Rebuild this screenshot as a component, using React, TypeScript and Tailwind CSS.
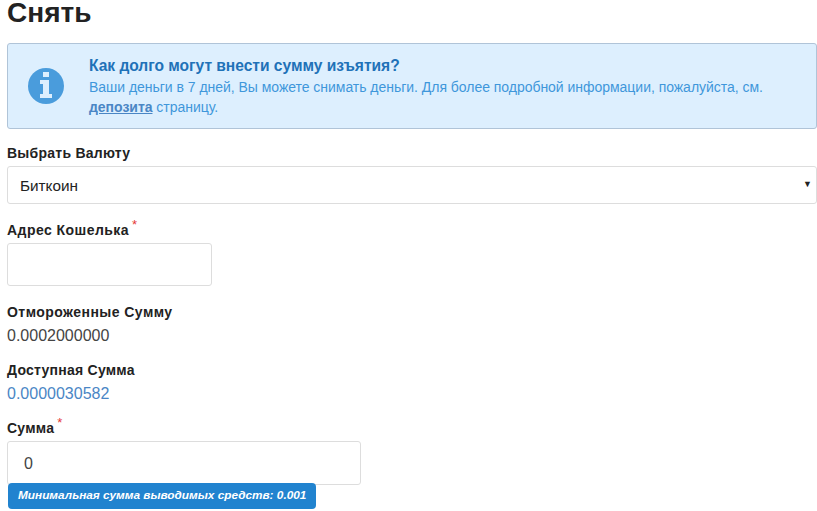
function Label({ text, required, wide }: { text: string; required?: boolean; wide?: boolean }) {
  return (
    <div className={`h-[20px] text-[14px] leading-[20px] font-bold text-[#222] ${wide ? "tracking-[0.45px]" : "tracking-[0.25px]"}`}>
      {text}
      {required && <sup className="ml-[3px] text-[13px] font-normal text-[#e53935]">*</sup>}
    </div>
  );
}

function InfoIcon() {
  return (
    <svg viewBox="0 0 36 36" className="h-[36px] w-[36px]">
      <circle cx="18" cy="18" r="18" fill="#4a9cdc" />
      <path d="M15 4h6v5h-6zM12 12h9v14h3v4H12v-4h3v-10h-3z" fill="#ddeffe" />
    </svg>
  );
}

export default function App() {
  return (
    <div className="h-[511px] w-[817px] overflow-hidden bg-white pl-[7px] font-['Liberation_Sans',sans-serif] text-[#333]">
      <h1 className="h-[43px] text-[28px] leading-[26px] font-bold text-[#222]">Снять</h1>

      <div className="flex h-[86px] items-center rounded-[3px] border border-[#b0c4d8] bg-[#ddeffe]">
        <div className="ml-[20px] w-[61px] shrink-0">
          <InfoIcon />
        </div>
        <div className="text-[14px] leading-[20px] tracking-[-0.03px] text-[#3f97db]">
          <div className="text-[15.6px] leading-[22px] font-bold text-[#1f72b8]">Как долго могут внести сумму изъятия?</div>
          <div>Ваши деньги в 7 дней, Вы можете снимать деньги. Для более подробной информации, пожалуйста, см.</div>
          <div>
            <span className="font-bold text-[#4a86c5] underline">депозита</span> страницу.
          </div>
        </div>
      </div>

      <div className="mt-[14px]">
        <Label text="Выбрать Валюту" />
      </div>
      <div className="mt-[3px] flex h-[38px] items-center justify-between rounded-[3px] border border-[#ddd] pr-[4px] pl-[12px] text-[15.3px] text-[#222]">
        <span className="pt-[2px]">Биткоин</span>
        <span className="text-[9px] text-[#222]">▼</span>
      </div>

      <div className="mt-[16px]">
        <Label text="Адрес Кошелька" required wide />
      </div>
      <div className="mt-[3px] h-[43px] w-[205px] rounded-[3px] border border-[#ddd]" />

      <div className="mt-[16px]">
        <Label text="Отмороженные Сумму" wide />
      </div>
      <div className="mt-[2px] h-[24px] text-[16px] leading-[24px] text-[#444]">0.0002000000</div>

      <div className="mt-[12px]">
        <Label text="Доступная Сумма" />
      </div>
      <div className="mt-[2px] h-[24px] text-[16px] leading-[24px] text-[#4a86c5]">0.0000030582</div>

      <div className="mt-[12px]">
        <Label text="Сумма" required />
      </div>
      <div className="mt-[3px] flex h-[44px] w-[354px] items-center rounded-[3px] border border-[#ddd] pt-[2px] pl-[16px] text-[16px] text-[#444]">
        0
      </div>
      <div className="relative z-10 ml-[1px] -mt-[2px] flex h-[26px] w-[308px] items-center rounded-[4px] bg-[#2183cf] pl-[10px] text-[11.8px] font-bold text-white italic">
        Минимальная сумма выводимых средств: 0.001
      </div>
    </div>
  );
}
